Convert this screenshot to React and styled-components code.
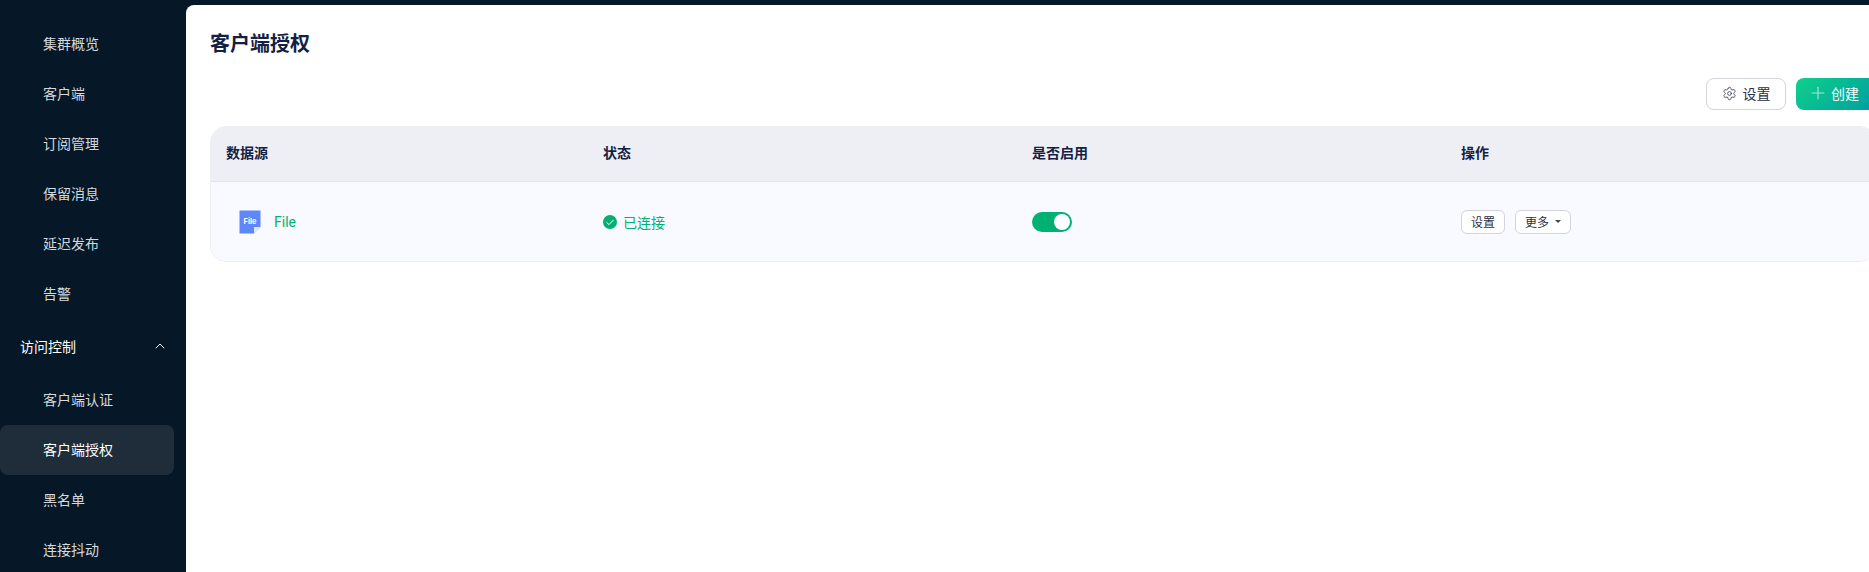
import styled, { createGlobalStyle } from "styled-components";
import { Settings, Plus, ChevronUp } from "lucide-react";

const GlobalStyle = createGlobalStyle`
  html, body {
    margin: 0;
    padding: 0;
    height: 100%;
    overflow: hidden;
    background: #061827;
  }
  body {
    font-family: "Inter", "Noto Sans CJK SC", sans-serif;
    font-size: 14px;
  }
`;

const menuTop = ["集群概览", "客户端", "订阅管理", "保留消息", "延迟发布", "告警"];
const menuAccess = ["客户端认证", "客户端授权", "黑名单", "连接抖动"];

function FileIcon() {
  return (
    <svg width="22" height="24" viewBox="0 0 22 24">
      <path d="M0.5 0.5H21.5V17L15 23.5H0.5Z" fill="#5d87fb" />
      <path d="M15 23.5V17H21.5Z" fill="#e3e6f2" />
      <text x="11" y="14" textAnchor="middle" fontSize="7.5" fontWeight="700" fill="#fff" fontFamily="Inter, sans-serif">
        File
      </text>
    </svg>
  );
}

function CheckIcon() {
  return (
    <svg width="14" height="14" viewBox="0 0 14 14">
      <circle cx="7" cy="7" r="7" fill="#00b173" />
      <path d="M3.5 7.3L6 9.6L10.6 4.9" fill="none" stroke="#fff" strokeWidth="1" />
    </svg>
  );
}

export default function App() {
  return (
    <Page>
      <GlobalStyle />
      <Sidebar>
        {menuTop.map((item) => (
          <MenuItem key={item}>{item}</MenuItem>
        ))}
        <MenuGroup>
          访问控制
          <ChevronUp size={16} strokeWidth={1.5} />
        </MenuGroup>
        {menuAccess.map((item) => (
          <MenuItem key={item} $active={item === "客户端授权"}>
            {item}
          </MenuItem>
        ))}
      </Sidebar>
      <Main>
        <Title>客户端授权</Title>
        <Toolbar>
          <ToolButton>
            <Settings size={15} strokeWidth={1.4} color="#41465a" />
            设置
          </ToolButton>
          <PrimaryButton>
            <Plus size={20} strokeWidth={1.3} color="#a4ecd4" />
            创建
          </PrimaryButton>
        </Toolbar>
        <Table>
          <HeadRow>
            <span>数据源</span>
            <span>状态</span>
            <span>是否启用</span>
            <span>操作</span>
          </HeadRow>
          <BodyRow>
            <SourceCell>
              <FileIcon />
              File
            </SourceCell>
            <StatusCell>
              <CheckIcon />
              已连接
            </StatusCell>
            <div>
              <Switch />
            </div>
            <Actions>
              <SmallButton>设置</SmallButton>
              <SmallButton>
                更多
                <Caret />
              </SmallButton>
            </Actions>
          </BodyRow>
        </Table>
      </Main>
    </Page>
  );
}

const Page = styled.div`
  display: flex;
  width: 1869px;
  height: 572px;
  overflow: hidden;
  background: #061827;
`;

const Sidebar = styled.nav`
  flex: 0 0 186px;
  padding-top: 19px;
  color: #d5d9de;
`;

const MenuItem = styled.div`
  display: flex;
  align-items: center;
  width: 174px;
  height: 50px;
  padding-left: 43px;
  box-sizing: border-box;
  border-radius: 8px;
  line-height: 50px;
  color: ${(p) => (p.$active ? "#fff" : "#d5d9de")};
  background: ${(p) => (p.$active ? "#1f2d3b" : "transparent")};
`;

const MenuGroup = styled.div`
  display: flex;
  align-items: center;
  justify-content: space-between;
  height: 54px;
  margin-bottom: 2px;
  padding: 0 18px 0 20px;
  color: #fff;
`;

const Main = styled.main`
  flex: 0 0 1714px;
  box-sizing: border-box;
  height: 567px;
  margin-top: 5px;
  padding: 24px 24px 0;
  background: #fff;
  border-radius: 8px 0 0 0;
`;

const Title = styled.h1`
  margin: 0;
  font-size: 20px;
  font-weight: 700;
  line-height: 30px;
  color: #141f44;
`;

const Toolbar = styled.div`
  display: flex;
  justify-content: flex-end;
  gap: 10px;
  margin: 19px 0 16px;
`;

const ToolButton = styled.button`
  display: flex;
  align-items: center;
  justify-content: center;
  gap: 6px;
  width: 80px;
  height: 32px;
  padding: 0 0 2px;
  border: 1px solid #d1d3de;
  border-radius: 8px;
  background: #fff;
  font: inherit;
  font-size: 14px;
  color: #2a2f45;
`;

const PrimaryButton = styled(ToolButton)`
  gap: 3px;
  padding: 0 5px 2px 0;
  border: 0;
  background: linear-gradient(135deg, #0fd08b 0%, #009e9f 100%);
  color: #fff;
`;

const Table = styled.div`
  border: 1px solid #edeef3;
  border-radius: 16px;
  overflow: hidden;
  color: #141f44;
`;

const Columns = styled.div`
  display: grid;
  box-sizing: border-box;
  grid-template-columns: 377px 429px 429px 1fr;
  align-items: center;
  padding: 0 15px;
`;

const HeadRow = styled(Columns)`
  height: 55px;
  padding-bottom: 4px;
  background: #eeeff4;
  border-bottom: 1px solid #e4e5ec;
  font-weight: 700;
`;

const BodyRow = styled(Columns)`
  height: 79px;
  background: #f9faff;
`;

const SourceCell = styled.div`
  display: flex;
  align-items: center;
  gap: 13px;
  padding-left: 13px;
  font-family: "Roboto", sans-serif;
  color: #00b173;
`;

const StatusCell = styled.div`
  display: flex;
  align-items: center;
  gap: 6px;
  color: #00b173;
`;

const Switch = styled.div`
  position: relative;
  width: 40px;
  height: 20px;
  border-radius: 10px;
  background: #00b173;

  &::after {
    content: "";
    position: absolute;
    top: 2px;
    right: 2px;
    width: 16px;
    height: 16px;
    border-radius: 50%;
    background: #fff;
  }
`;

const Actions = styled.div`
  display: flex;
  gap: 10px;
`;

const SmallButton = styled.button`
  display: flex;
  align-items: center;
  justify-content: center;
  gap: 4px;
  height: 24px;
  padding: 0 9px;
  border: 1px solid #d1d3de;
  border-radius: 6px;
  background: #fff;
  font: inherit;
  font-size: 12px;
  color: #2a2f45;
`;

const Caret = styled.i`
  width: 0;
  height: 0;
  margin-left: 2px;
  border-left: 3px solid transparent;
  border-right: 3px solid transparent;
  border-top: 3px solid #41465a;
`;
